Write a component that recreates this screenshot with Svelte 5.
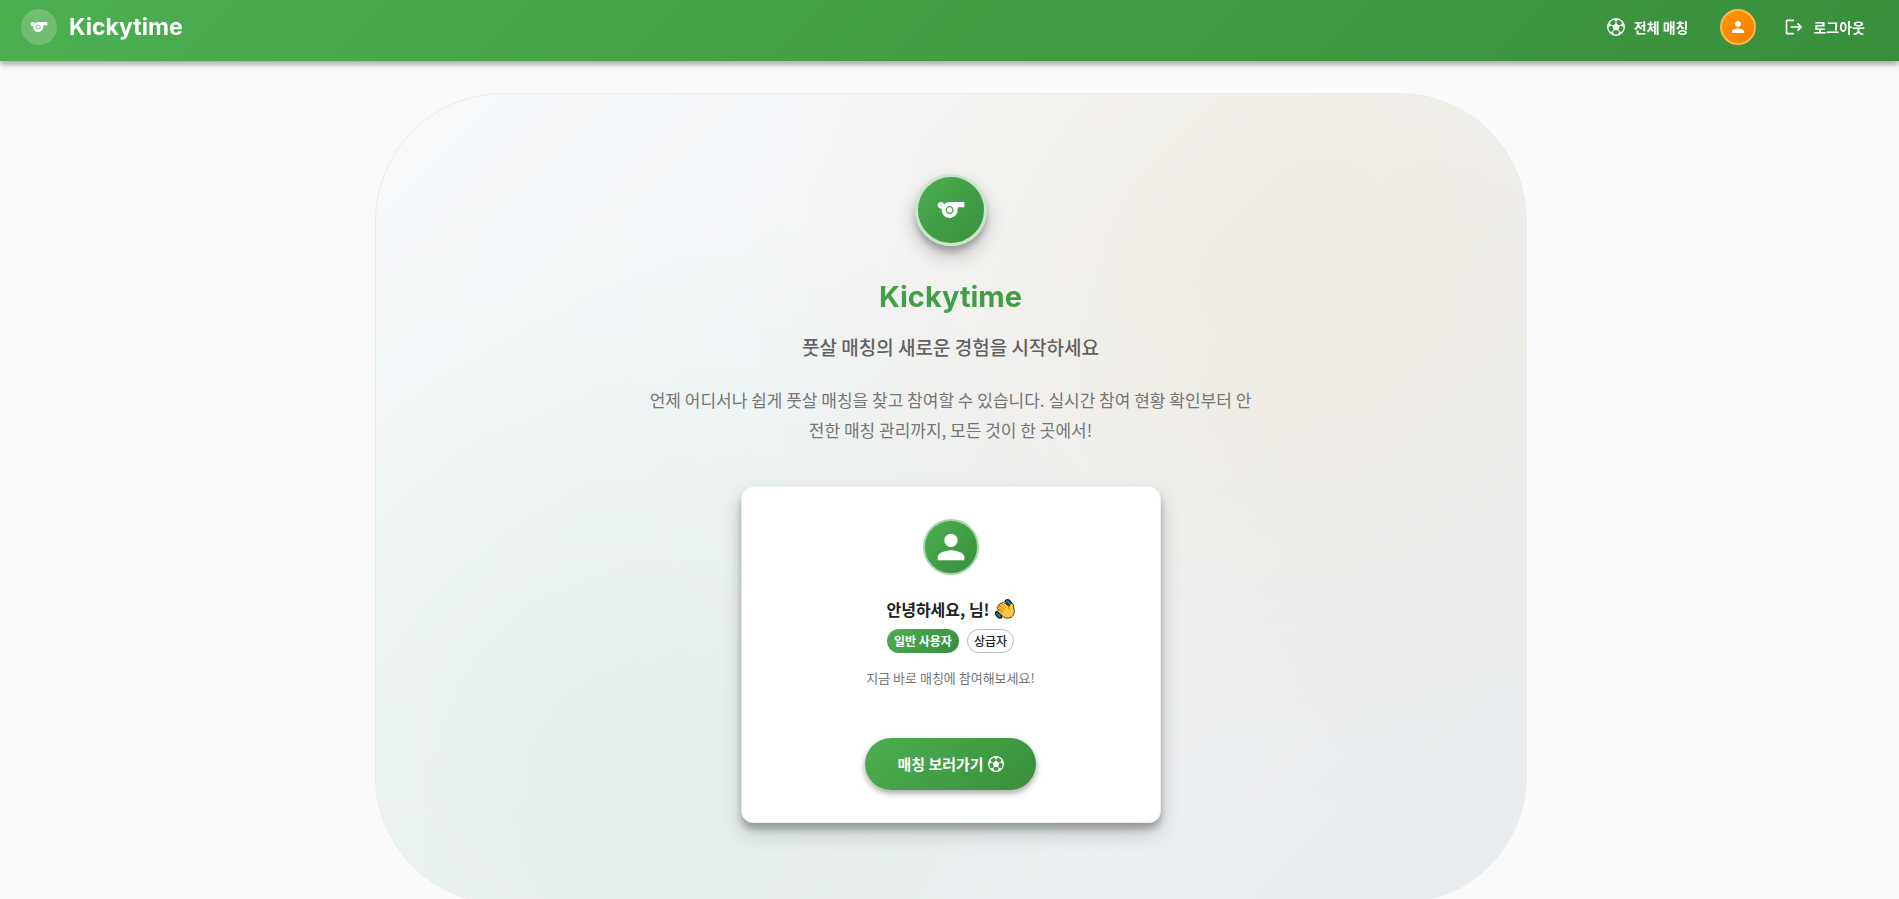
<script>
  const paths = {
    whistle:
      'M11.23 6c-1.66 0-3.22.66-4.36 1.73C6.54 6.73 5.61 6 4.5 6 3.12 6 2 7.12 2 8.5S3.12 11 4.5 11c.21 0 .41-.03.61-.08-.05.25-.09.51-.1.78-.18 3.68 2.95 6.68 6.68 6.27 2.55-.28 4.68-2.26 5.19-4.77.15-.71.15-1.4.06-2.06-.09-.6.38-1.13.99-1.13H22V6zM4.5 9c-.28 0-.5-.22-.5-.5s.22-.5.5-.5.5.22.5.5-.22.5-.5.5m6.5 6c-1.66 0-3-1.34-3-3s1.34-3 3-3 3 1.34 3 3-1.34 3-3 3m0-5a2 2 0 1 0 0 4 2 2 0 0 0 0-4',
    person:
      'M12 12c2.21 0 4-1.79 4-4s-1.79-4-4-4-4 1.79-4 4 1.79 4 4 4m0 2c-2.67 0-8 1.34-8 4v2h16v-2c0-2.66-5.33-4-8-4',
    logout:
      'm17 7-1.41 1.41L18.17 11H8v2h10.17l-2.58 2.58L17 17l5-5zM4 5h8V3H4c-1.1 0-2 .9-2 2v14c0 1.1.9 2 2 2h8v-2H4z'
  };
</script>

{#snippet icon(name, size)}
  <svg class="icon" width={size} height={size} viewBox="0 0 24 24" aria-hidden="true">
    <path d={paths[name]} />
  </svg>
{/snippet}

{#snippet ball(size)}
  <svg class="icon" width={size} height={size} viewBox="0 0 20 20" aria-hidden="true">
    <circle cx="10" cy="10" r="9.200" fill="none" stroke="currentColor" stroke-width="1.500" />
    <path d="M10 5.800l4.100 3-1.600 4.800h-5L5.900 8.800z" />
    <path
      d="M10 7V3.500M13.200 9l3.600-1.300M12 12.800l2.300 3.200M8 12.800L5.700 16M6.800 9L3.200 7.700"
      fill="none" stroke="currentColor" stroke-width="1" />
    <path
      d="M6.800 1.400h6.400L10 4.200zM17 4.500l2 6.200-3.400-2.600zM17 15.500l-5 3.400 1.500-4zM8 18.900l-5-3.400 3.600-.6zM1 10.700l2-6.200 1.400 3.600z" />
  </svg>
{/snippet}

<div class="page">
  <header class="bar">
    <a class="brand" href="#home">
      <span class="brand-mark">{@render icon('whistle', 20)}</span>
      <span>Kickytime</span>
    </a>
    <nav class="nav">
      <a class="nav-link" href="#matches">{@render ball(18)}<span>전체 매칭</span></a>
      <button class="avatar" type="button" aria-label="프로필">{@render icon('person', 18)}</button>
      <button class="nav-link" type="button">{@render icon('logout', 20)}<span>로그아웃</span></button>
    </nav>
  </header>

  <main>
    <section class="hero">
      <div class="hero-mark">{@render icon('whistle', 32)}</div>
      <h1>Kickytime</h1>
      <h2>풋살 매칭의 새로운 경험을 시작하세요</h2>
      <p class="lead">
        언제 어디서나 쉽게 풋살 매칭을 찾고 참여할 수 있습니다. 실시간 참여 현황 확인부터 안전한 매칭 관리까지, 모든 것이 한 곳에서!
      </p>

      <article class="card">
        <div class="user-mark">{@render icon('person', 40)}</div>
        <h3>
          <span>안녕하세요, 님!</span>
          <svg width="20" height="20" viewBox="0 0 20 20" aria-hidden="true">
            <g fill="#1c7f9a" stroke="#101418" stroke-width="1.200">
              <path d="M10 2.200c.8-1.700 3-2 4.600-.7l1.300 1.500c1.100 1.500.7 3-.3 3.800l-2.800-1.200z" />
              <path d="M1.200 12.500c-1 1.400-.8 3 .3 4.200l1.500 1.600c1.300 1 3 .9 3.900-.2l-1-3z" />
            </g>
            <path
              d="M3.200 7.800c-.8-1 .2-2.300 1.400-1.700-.5-1.400.9-2.400 2-1.500C6.600 3.200 8.200 2.700 9 3.700l5.200 3.600.6-1.800c.6-1.500 3.200-1.300 3.500.4l.9 5c.8 4-1.900 8-5.700 8.200-2.500.2-4.500-.7-6.200-2.300L3 13c-1-1.100.1-2.300 1.200-1.900L2.500 9.700c-.8-.9-.2-2 .7-1.900z"
              fill="#ffc83d" stroke="#1a1408" stroke-width=".8" />
            <path
              d="M4.600 6.100l5 4.600M6.600 4.600l4.700 4.300M3.700 8.300l4.700 4.300M4.300 11l3 2.700M14.200 7.300c-.6 1.700-.3 2.600.6 3.700"
              fill="none" stroke="#a96c0c" stroke-width=".8" />
          </svg>
        </h3>
        <div class="chips">
          <span class="chip filled">일반 사용자</span>
          <span class="chip outlined">상급자</span>
        </div>
        <p class="hint">지금 바로 매칭에 참여해보세요!</p>
        <a class="cta" href="#matches"><span>매칭 보러가기</span>{@render ball(16)}</a>
      </article>
    </section>
  </main>
</div>

<style>
  :global(body) {
    margin: 0;
    background: #fafafa;
  }

  .page {
    --green: linear-gradient(135deg, #4caf50 0%, #388e3c 100%);
    --shadow-low: 0 3px 6px rgba(0, 0, 0, 0.16), 0 3px 6px rgba(0, 0, 0, 0.23);
    --shadow-high: 0 10px 20px rgba(0, 0, 0, 0.19), 0 6px 6px rgba(0, 0, 0, 0.23);
    box-sizing: border-box;
    height: 100vh;
    overflow-y: auto;
    scrollbar-width: none;
    background: #fafafa;
    color: #212121;
    font-family: 'Inter', 'Noto Sans CJK KR', sans-serif;
  }

  .page :global(*) {
    box-sizing: border-box;
  }

  .icon {
    display: block;
    flex: none;
    fill: currentColor;
  }

  .bar {
    position: sticky;
    top: 0;
    z-index: 1;
    display: flex;
    align-items: center;
    justify-content: space-between;
    padding: 9px 34px 16px 21px;
    background: var(--green);
    color: #fff;
    box-shadow: var(--shadow-low);
  }

  .brand {
    display: flex;
    align-items: center;
    gap: 12px;
    color: inherit;
    font-size: 23px;
    font-weight: 700;
    line-height: 36px;
    text-decoration: none;
  }

  .brand-mark,
  .avatar,
  .hero-mark,
  .user-mark {
    display: flex;
    align-items: center;
    justify-content: center;
    border-radius: 50%;
    color: #fff;
  }

  .brand-mark {
    width: 36px;
    height: 36px;
    background: rgba(255, 255, 255, 0.2);
  }

  .nav {
    display: flex;
    align-items: center;
    gap: 32px;
  }

  .nav-link {
    display: flex;
    align-items: center;
    gap: 9px;
    padding: 0;
    border: 0;
    background: none;
    color: #fff;
    font: 600 14px/24px 'Noto Sans CJK KR', sans-serif;
    text-decoration: none;
    cursor: pointer;
  }

  button.nav-link {
    margin-left: -4px;
  }

  .avatar {
    width: 36px;
    height: 36px;
    padding: 0;
    border: 2px solid #ffb74d;
    background: linear-gradient(135deg, #ff9800, #f57c00);
    background-origin: border-box;
    cursor: pointer;
  }

  main {
    display: flex;
    justify-content: center;
    padding: 32px 24px 32px 26px;
  }

  .hero {
    display: flex;
    flex-direction: column;
    align-items: center;
    width: 100%;
    max-width: 1152px;
    padding: 80px 24px;
    border: 1px solid #eaecec;
    border-radius: 128px;
    background:
      radial-gradient(circle at 20% 80%, rgba(76, 175, 80, 0.07) 0%, transparent 50%),
      radial-gradient(circle at 80% 20%, rgba(255, 152, 0, 0.08) 0%, transparent 50%),
      linear-gradient(135deg, #f8fafc 0%, #e8ecef 100%);
    text-align: center;
  }

  .hero-mark {
    width: 72px;
    height: 72px;
    border: 3px solid #c8e6c9;
    background: var(--green);
    box-shadow: var(--shadow-high);
  }

  h1,
  h2,
  h3,
  p {
    margin: 0;
  }

  h1 {
    width: 100%;
    margin-top: 32px;
    background: var(--green);
    background-clip: text;
    color: transparent;
    font-size: 29px;
    font-weight: 700;
    line-height: 38px;
  }

  h2 {
    margin-top: 16px;
    color: #616161;
    font-family: 'Noto Sans CJK KR', sans-serif;
    font-size: 19px;
    font-weight: 500;
    line-height: 30px;
  }

  .lead {
    max-width: 612px;
    margin-top: 23px;
    color: #757575;
    font-family: 'Noto Sans CJK KR', sans-serif;
    font-size: 17px;
    line-height: 30px;
  }

  .card {
    display: flex;
    flex-direction: column;
    align-items: center;
    width: 100%;
    max-width: 420px;
    margin-top: 41px;
    padding: 32px;
    border: 1px solid #eee;
    border-radius: 12px;
    background: #fff;
    font-family: 'Noto Sans CJK KR', sans-serif;
    box-shadow: var(--shadow-high);
  }

  .user-mark {
    width: 56px;
    height: 56px;
    border: 2px solid #a5d6a7;
    background: var(--green);
  }

  h3 {
    display: flex;
    align-items: center;
    gap: 5px;
    margin-top: 20px;
    font-size: 16px;
    font-weight: 600;
    line-height: 28px;
  }

  .chips {
    display: flex;
    gap: 8px;
    margin-top: 6px;
  }

  .chip {
    padding: 0 7px;
    border-radius: 12px;
    font-size: 12px;
    line-height: 24px;
  }

  .filled {
    background: var(--green);
    color: #fff;
    font-weight: 700;
  }

  .outlined {
    padding: 0 6px;
    border: 1px solid #bdbdbd;
    font-weight: 500;
    line-height: 22px;
  }

  .hint {
    margin-top: 13px;
    color: #757575;
    font-size: 13px;
    line-height: 24px;
  }

  .cta {
    display: flex;
    align-items: center;
    gap: 4px;
    margin-top: 48px;
    padding: 12px 32px;
    border-radius: 26px;
    background: var(--green);
    color: #fff;
    font-size: 15px;
    font-weight: 700;
    line-height: 28px;
    text-decoration: none;
    box-shadow: var(--shadow-low);
  }
</style>
